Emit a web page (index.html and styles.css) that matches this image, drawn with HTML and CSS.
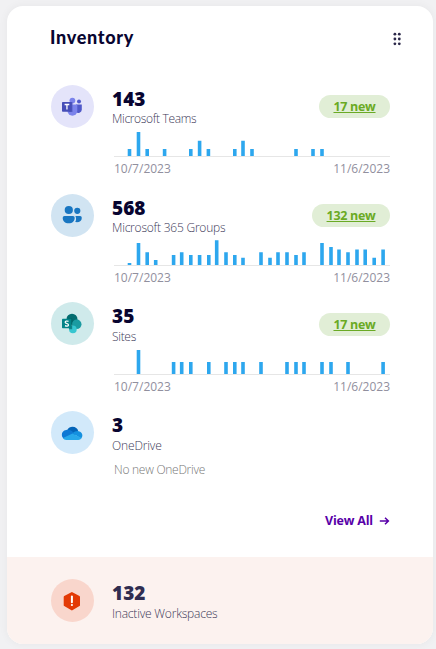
FILE: index.html
```html
<!DOCTYPE html>
<html lang="en">
<head>
<meta charset="utf-8">
<title>Inventory</title>
<link rel="stylesheet" href="styles.css">
</head>
<body>
<main class="card">
  <header class="head">
    <h1 class="title">Inventory</h1>
    <svg class="grip" width="10" height="14" viewBox="0 0 10 14" fill="#2b2849"><circle cx="2.9" cy="2.2" r="1.4"/><circle cx="7.3" cy="2.2" r="1.4"/><circle cx="2.9" cy="7" r="1.4"/><circle cx="7.3" cy="7" r="1.4"/><circle cx="2.9" cy="11.8" r="1.4"/><circle cx="7.3" cy="11.8" r="1.4"/></svg>
  </header>

  <section class="row">
    <div class="badge teams">
      <svg width="22" height="22" viewBox="0 0 22 22"><circle cx="18" cy="5.5" r="2" fill="#5059c9"/><path d="M15 8.5h5.8v5.3a3.3 3.3 0 0 1-5.8 2z" fill="#5059c9"/><circle cx="11.4" cy="4.6" r="2.9" fill="#7b83eb"/><path d="M6.5 8.5h9.8v6.3a4.9 4.9 0 0 1-9.8 0z" fill="#7b83eb"/><path d="M8 6h3.5v10H8z" fill="#5861c8"/><rect x="1" y="6" width="9.8" height="9.8" rx=".8" fill="#464eb8"/><path d="M3.6 8.5h4.7M5.95 8.5v5" stroke="#fff" stroke-width="1.3"/></svg>
    </div>
    <div class="info">
      <div class="top"><div><div class="count">143</div><div class="label l-teams">Microsoft Teams</div></div><a class="pill">17 new</a></div>
      <svg class="chart" width="276" height="27" viewBox="0 0 276 27"><path class="axis" d="M0 26.5h276"/><path class="bars" d="M15.5 26v-7M24.5 26v-24M33.2 26v-7M50.6 26v-7M76.8 26v-7M85.6 26v-15.3M94.4 26v-7M120.8 26v-7M129 26v-15.3M138 26v-7M182 26v-7M199 26v-7M208 26v-7"/></svg>
      <div class="dates"><span>10/7/2023</span><span>11/6/2023</span></div>
    </div>
  </section>

  <section class="row">
    <div class="badge groups">
      <svg width="22" height="22" viewBox="0 0 22 22" fill="#1976c1"><circle cx="7.8" cy="6" r="4.1"/><circle cx="16.3" cy="6.8" r="3.1"/><path d="M3.5 12H12a1.7 1.7 0 0 1 1.7 1.7c0 3.5-2.2 5.5-6 5.5s-6-2-6-5.5A1.8 1.8 0 0 1 3.5 12z"/><path d="M14.4 12h4.7a1.7 1.7 0 0 1 1.7 1.7c0 3.3-2.4 5-6.6 4.4 1-1.5 1.3-3.8.2-6.1z"/></svg>
    </div>
    <div class="info">
      <div class="top"><div><div class="count">568</div><div class="label l-groups">Microsoft 365 Groups</div></div><a class="pill wide">132 new</a></div>
      <svg class="chart" width="276" height="27" viewBox="0 0 276 27"><path class="axis" d="M0 26.5h276"/><path class="bars" d="M15.5 26v-2M24.5 26v-22M33.2 26v-12.7M41.7 26v-5M59.6 26v-10M67.7 26v-12.7M76.8 26v-10M85.6 26v-10M94.8 26v-10M102.7 26v-24.7M112 26v-12.7M120.8 26v-10M129 26v-7.3M147 26v-12.7M156 26v-7.3M164 26v-12.7M173 26v-12.7M182 26v-10M190 26v-12.7M208 26v-22M217 26v-18M225 26v-15.5M234 26v-12.7M243 26v-15.5M251.2 26v-15.5M260.2 26v-7.3M269.1 26v-15.5"/></svg>
      <div class="dates"><span>10/7/2023</span><span>11/6/2023</span></div>
    </div>
  </section>

  <section class="row">
    <div class="badge sites">
      <svg width="22" height="22" viewBox="0 0 22 22"><circle cx="11" cy="6.2" r="5.5" fill="#036c70"/><circle cx="15.7" cy="11.3" r="4.8" fill="#1a9ba1"/><circle cx="11.9" cy="16.4" r="3.8" fill="#37c6d0"/><path d="M7 5.5h4.2v10.8H8z" fill="#025659" opacity=".6"/><rect x="1" y="5.8" width="9.4" height="9.4" rx=".8" fill="#038387"/><path d="M7.5 8.4C5.8 7.6 4 8 4.2 9.3c.2 1.4 3.3 1 3.3 2.6 0 1.3-2 1.5-3.5.7" fill="none" stroke="#fff" stroke-width="1.2"/></svg>
    </div>
    <div class="info">
      <div class="top"><div><div class="count">35</div><div class="label l-sites">Sites</div></div><a class="pill">17 new</a></div>
      <svg class="chart" width="276" height="27" viewBox="0 0 276 27"><path class="axis" d="M0 26.5h276"/><path class="bars" d="M24.5 26v-24M59.6 26v-12M67.7 26v-12M76.8 26v-12M94.8 26v-12M112 26v-12M120.8 26v-12M129 26v-12M147 26v-12M173 26v-12M182 26v-12M190 26v-12M208 26v-12M217 26v-12M234 26v-12M269.1 26v-12"/></svg>
      <div class="dates"><span>10/7/2023</span><span>11/6/2023</span></div>
    </div>
  </section>

  <section class="row last">
    <div class="badge onedrive">
      <svg width="22" height="22" viewBox="0 0 22 22"><path d="M6.2 8.2C7.5 5.8 9.3 4.8 11.5 4.8c3 0 5 1.8 5.8 4.4L13 14z" fill="#0364b8"/><path d="M5.2 8c2.5-.6 4.4.2 6 1.3l3 4L3 16.7C-.5 14.5.3 8.5 5.2 8z" fill="#0f78d4"/><path d="M11.5 11.2c2-1.6 4-2.4 6-2 3.9.3 5 4.8 2.6 7.2z" fill="#1490df"/><path d="M2 15.9l9.5-4.5 9 4.5c-.7 1.3-1.7 2-3.2 2H5.2c-1.5 0-2.5-.8-3.2-2z" fill="#28a8ea"/></svg>
    </div>
    <div class="info">
      <div class="count">3</div><div class="label l-onedrive">OneDrive</div>
      <div class="empty">No new OneDrive</div>
    </div>
  </section>

  <a class="viewall"><span>View All</span><svg width="11" height="10" viewBox="0 0 11 10" fill="none" stroke="#5800a8" stroke-width="1.5"><path d="M.8 5h8.6M6 1.7L9.4 5 6 8.3"/></svg></a>

  <footer class="inactive">
    <div class="badge alert">
      <svg width="22" height="22" viewBox="0 0 22 22"><path d="M10.9 2 18.5 6.1a1 1 0 0 1 .5.9v8.2a1 1 0 0 1-.5.9L10.9 20.5 3.2 16.1a1 1 0 0 1-.5-.9V7a1 1 0 0 1 .5-.9z" fill="#e33a06"/><path d="M10.9 6.5v5.8" stroke="#fff" stroke-width="2" stroke-linecap="round"/><circle cx="10.9" cy="15" r="1.1" fill="#fff"/></svg>
    </div>
    <div class="info"><div class="count muted">132</div><div class="label l-inactive">Inactive Workspaces</div></div>
  </footer>
</main>
</body>
</html>
```
FILE: styles.css
```css
* { box-sizing: border-box; }
body {
  margin: 0;
  padding: 6px 3px 5px 7px;
  height: 649px;
  overflow: hidden;
  background: #f1f1f3;
  font-family: "Open Sans", "Noto Sans", sans-serif;
}
.card {
  height: 638px;
  display: flex;
  flex-direction: column;
  background: #fff;
  border-radius: 16px;
  overflow: hidden;
  box-shadow: 0 0 10px rgba(20, 20, 40, .05);
}
.head {
  height: 79px;
  padding: 19px 31px 0 43px;
  display: flex;
  justify-content: space-between;
  flex: none;
}
.title {
  margin: 0;
  font: 900 18px/24px Lato, sans-serif;
  letter-spacing: .7px;
  color: #080530;
}
.grip { margin-top: 7px; }
.row {
  height: 108.7px;
  flex: none;
  padding: 0 43px 0 44px;
  display: flex;
  gap: 18px;
}
.row.last { height: 101.3px; }
.badge {
  width: 43px;
  height: 43px;
  flex: none;
  border-radius: 50%;
  display: flex;
  align-items: center;
  justify-content: center;
  padding-right: 1px;
}
.teams { background: #e4e4fa; }
.groups { background: #d1e4f2; }
.sites { background: #cfeaeb; }
.onedrive { background: #d2e9fa; }
.alert { background: #f9d6cc; }
.info { flex: 1; min-width: 0; }
.top { height: 44.2px; display: flex; justify-content: space-between; }
.count {
  font-size: 19px;
  line-height: 26px;
  height: 26px;
  padding-top: 1px;
  font-weight: 800;
  color: #080530;
}
.count.muted { color: #302d50; }
.label {
  font-size: 12px;
  line-height: 16px;
  padding-top: .2px;
  font-weight: 300;
  color: #3c3958;
  white-space: nowrap;
}
.l-teams { letter-spacing: -.33px; }
.l-groups { letter-spacing: -.22px; }
.l-sites { letter-spacing: -.3px; }
.l-onedrive { letter-spacing: -.15px; padding-top: 1px; }
.l-inactive { letter-spacing: -.2px; padding-top: 1px; }
.pill {
  margin-top: 10.2px;
  width: 71px;
  height: 23px;
  border-radius: 12px;
  background: #e1eed6;
  color: #6aaa24;
  font-size: 12.5px;
  line-height: 23px;
  font-weight: 700;
  text-align: center;
  text-decoration: underline;
  letter-spacing: -.3px;
}
.pill.wide { width: 78px; }
.chart { display: block; margin: 1px 0 0 2px; }
.axis { stroke: #e6e6e6; stroke-width: 1; }
.bars { stroke: #2da7ee; stroke-width: 3.6; }
.dates {
  display: flex;
  justify-content: space-between;
  padding-left: 2px;
  margin-top: 3px;
  font-size: 12px;
  line-height: 18px;
  color: #918f9e;
}
.empty {
  padding: 7px 0 0 2px;
  font-size: 12px;
  line-height: 18px;
  font-weight: 300;
  letter-spacing: -.27px;
  color: #777;
}
.viewall {
  flex: 1;
  padding: 0 43px 0 0;
  display: flex;
  justify-content: flex-end;
  gap: 6px;
  font-size: 12.5px;
  line-height: 18px;
  font-weight: 700;
  letter-spacing: -.2px;
  color: #5800a8;
}
.viewall svg { margin-top: 4px; }
.inactive {
  height: 87px;
  flex: none;
  padding: 22px 43px 0 44px;
  display: flex;
  gap: 18px;
  background: #fcf2ef;
}
```
